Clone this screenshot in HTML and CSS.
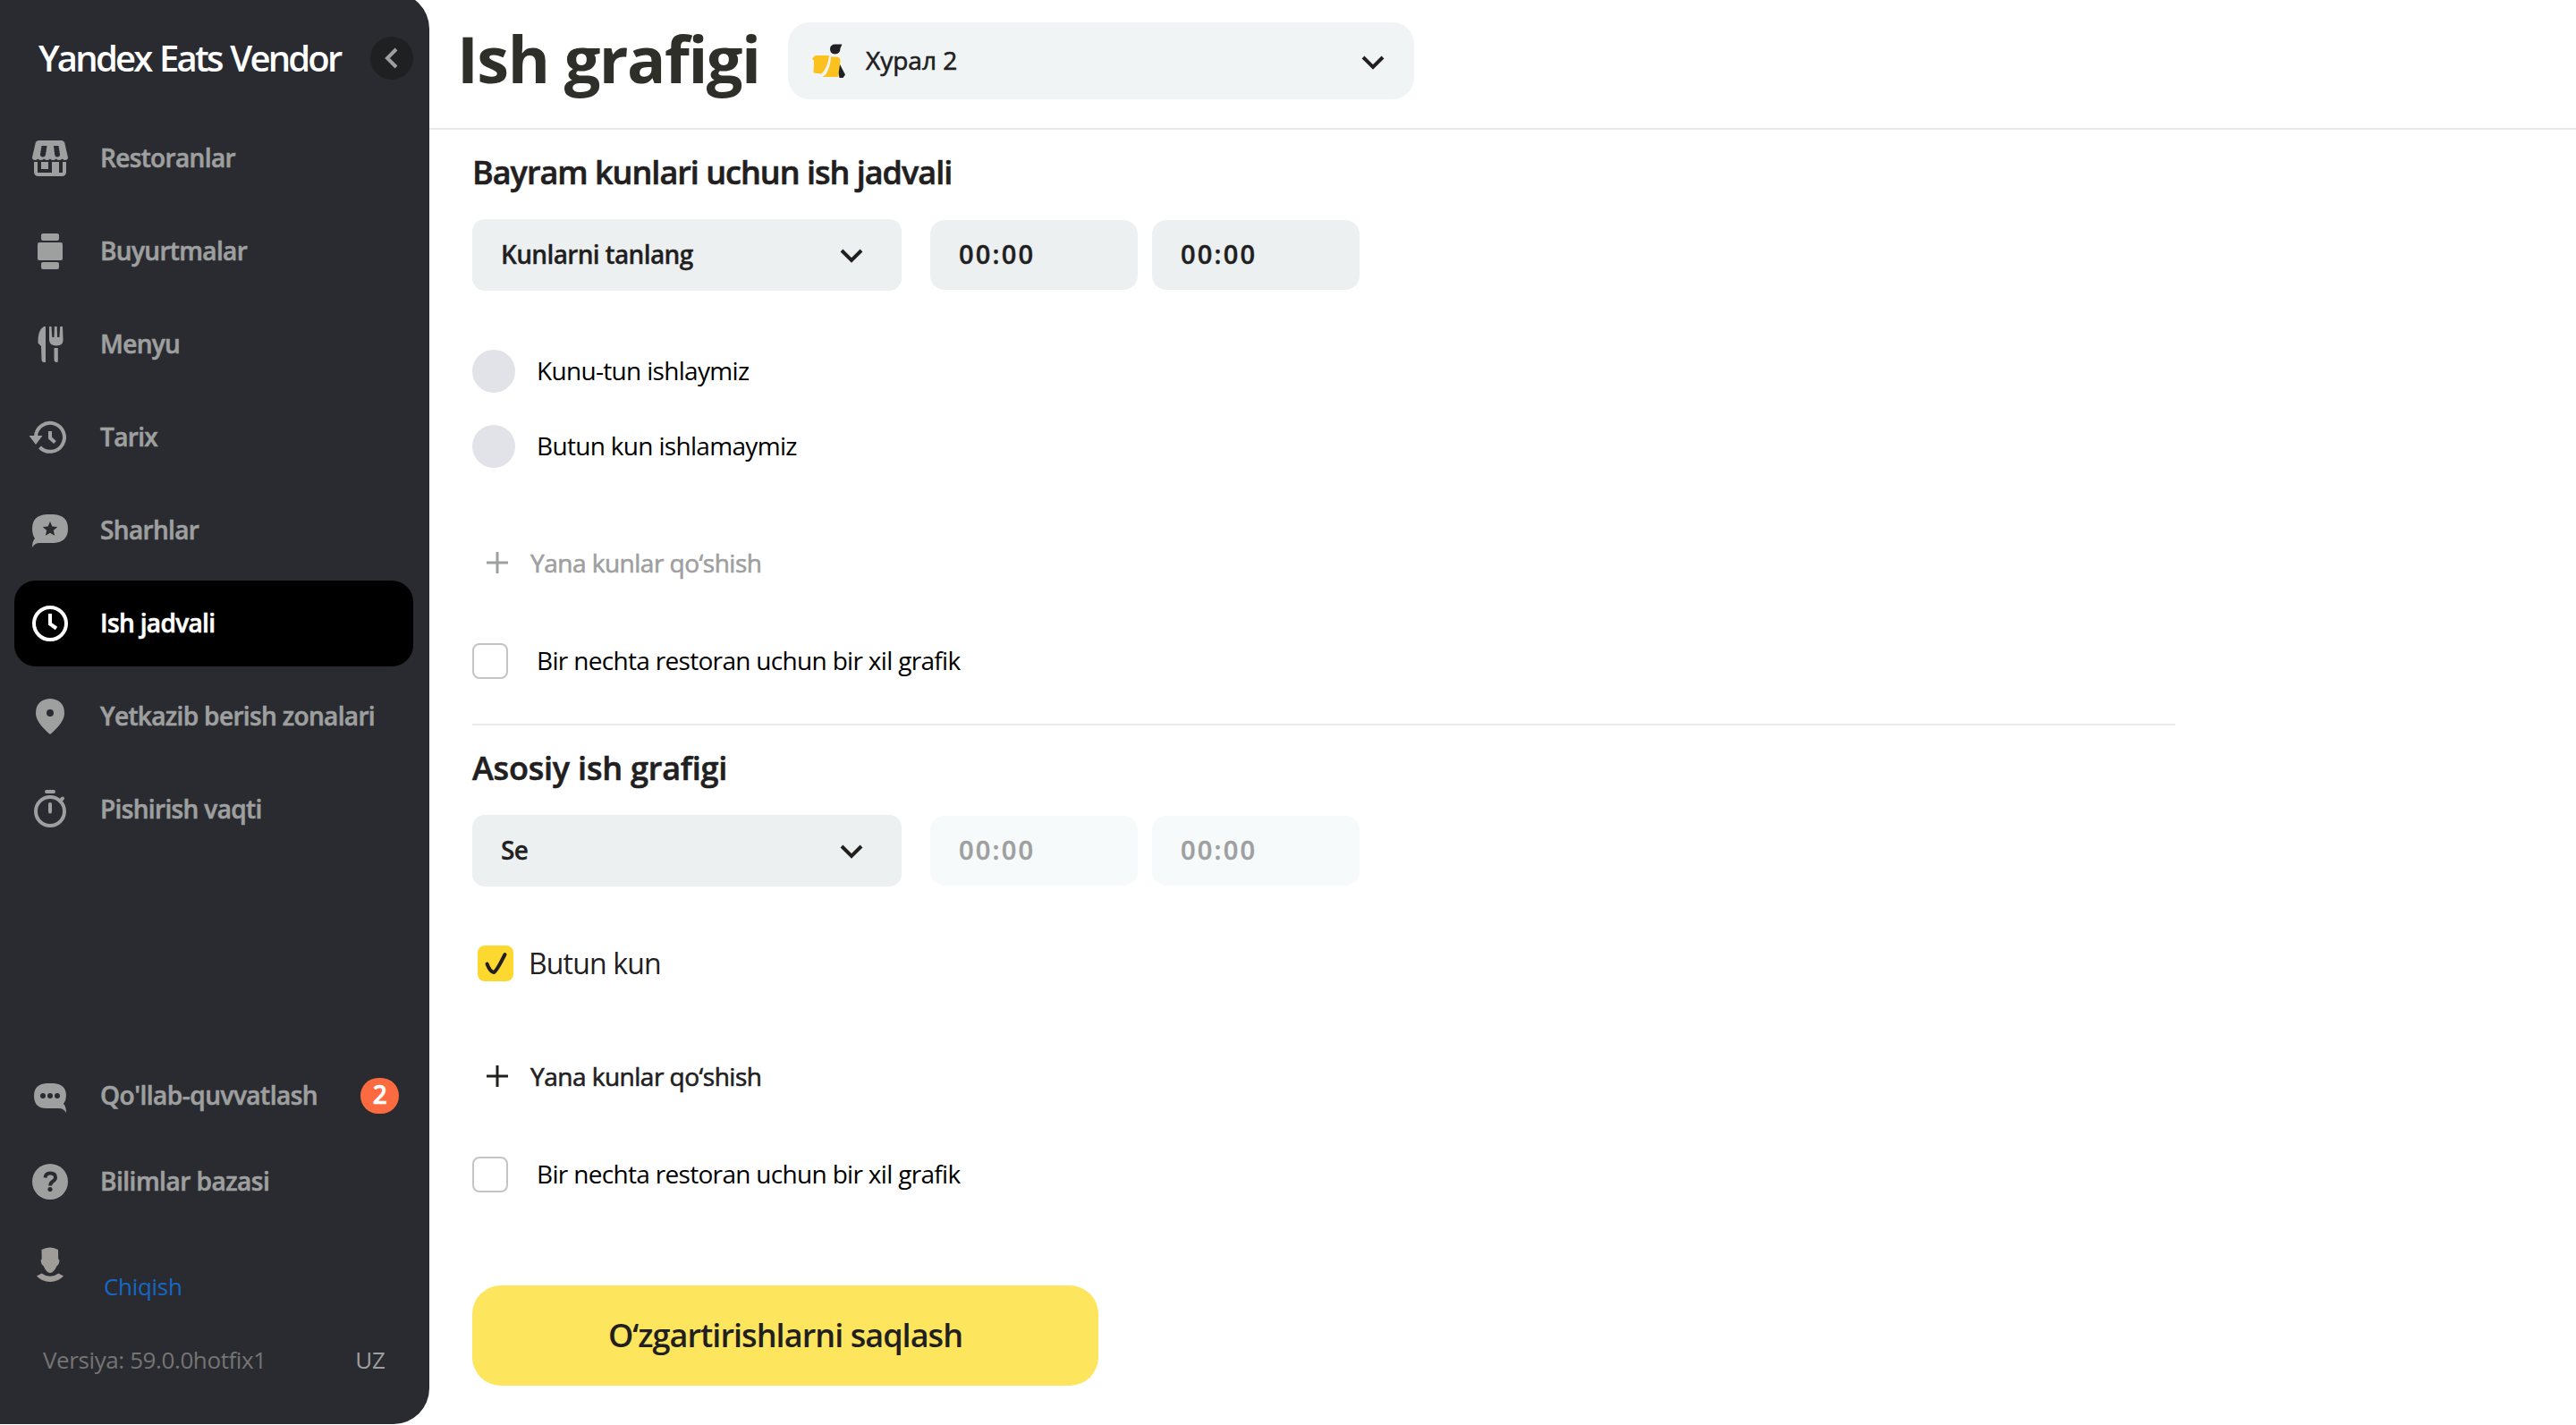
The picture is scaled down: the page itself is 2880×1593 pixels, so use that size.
FILE: index.html
```html
<!DOCTYPE html>
<html lang="uz">
  <head>
    <meta charset="UTF-8" />
    <meta name="viewport" content="width=device-width, initial-scale=1.0" />
    <title>Yandex Eats Vendor</title>
    <link rel="stylesheet" href="styles.css">
  </head>
  <body>
    <aside class="sidebar">
      <div class="brand">
        <span class="brand-name">Yandex Eats Vendor</span>
        <button class="collapse">
          <svg width="48" height="48" viewBox="0 0 48 48">
            <path d="M29 14L19 24l10 10" fill="none" stroke="#9e9f9f" stroke-width="4" />
          </svg>
        </button>
      </div>
      <nav class="menu">
        <a class="item" href="#">
          <svg class="icon" viewBox="0 0 48 48">
            <path fill-rule="evenodd" d="M12 4h24q4 0 4.600 4L44 23q0 3-3 3-2 0-3.400-1.500-1.700 1.500-3.400 1.500-2 0-3.400-1.500-1.700 1.500-3.400 1.500-2 0-3.400-1.500-1.700 1.500-3.400 1.500-2 0-3.400-1.500-1.700 1.500-3.400 1.500-2 0-3.400-1.500Q9 26 7 26q-3 0-3-3L7.400 8Q8 4 12 4zM14.500 10h6l-1.500 10q-.6 2.500-3 2.500-3.200 0-3-3zM28 10h5.500l1.500 9.500q.2 3-3 3-2.400 0-2.800-2.500z" />
            <path d="M6 28h4v12h16V28h8v12h4V28h4v11q0 5-5 5H11q-5 0-5-5zM14 28h8v8h-8z" />
          </svg>
          <span>Restoranlar</span>
        </a>
        <a class="item" href="#">
          <svg class="icon" viewBox="0 0 48 48">
            <rect x="14" y="4" width="20" height="8" rx="2" />
            <rect x="10" y="14" width="28" height="20" rx="2" />
            <rect x="14" y="36" width="20" height="8" rx="2" />
          </svg>
          <span>Buyurtmalar</span>
        </a>
        <a class="item" href="#">
          <svg class="icon" viewBox="0 0 48 48">
            <path d="M19 4v40h-1.500q-3 0-3-3L14 26l-3.500-3.500Q10 8 17 4z" />
            <path d="M23 4h2.500l.8 12h2.200l.4-12h2.800l.4 12h2.300l.8-12H38l.6 15q0 6.500-7.600 6.500T23 19zM28.500 28h4.300v15q0 1-1.200 1-3.100 0-3.100-3z" />
          </svg>
          <span>Menyu</span>
        </a>
        <a class="item" href="#">
          <svg class="icon" viewBox="0 0 48 48">
            <path class="line" d="M8 23a16 16 0 1 1 4.500 12" />
            <path d="M.5 22h15L8 32z" />
            <path class="line" d="M24 17v7.500l5.500 5" />
          </svg>
          <span>Tarix</span>
        </a>
        <a class="item" href="#">
          <svg class="icon" viewBox="0 0 48 48">
            <path fill-rule="evenodd" d="M20 6h8q16 1 16 16T28 38H12q-5 0-8 5 0-7 3-10-3-4-3-11Q4 7 20 6zM24 14l2.400 5.400 5.800.6-4.400 3.900 1.300 5.800-5.100-3-5.100 3 1.300-5.800-4.400-3.900 5.800-.6z" />
          </svg>
          <span>Sharhlar</span>
        </a>
        <a class="item active" href="#">
          <svg class="icon" viewBox="0 0 48 48">
            <circle class="line" cx="24" cy="24" r="18" />
            <path class="line" d="M24 13v11.500l7 5" />
          </svg>
          <span>Ish jadvali</span>
        </a>
        <a class="item" href="#">
          <svg class="icon" viewBox="0 0 48 48">
            <path fill-rule="evenodd" d="M24 4q16 1 16 16.500 0 10-16 23.500Q8 30.500 8 20.500 8 5 24 4zM24 16a4 4 0 1 0 0 8 4 4 0 1 0 0-8z" />
          </svg>
          <span>Yetkazib berish zonalari</span>
        </a>
        <a class="item" href="#">
          <svg class="icon" viewBox="0 0 48 48">
            <circle class="line" cx="24" cy="26" r="16" />
            <path class="line round" d="M20 4h8M24 18v8.500M35 14.500l3-3" />
          </svg>
          <span>Pishirish vaqti</span>
        </a>
      </nav>
      <div class="bottom">
        <a class="item" href="#">
          <svg class="icon" viewBox="0 0 48 48">
            <path fill-rule="evenodd" d="M20 10h8q14 1 14 14 0 5-3 9 3 3 3 10-3-5-8-5H20Q6 38 6 24q0-13 14-14zM16 21a3 3 0 1 0 0 6 3 3 0 1 0 0-6zM24 21a3 3 0 1 0 0 6 3 3 0 1 0 0-6zM32 21a3 3 0 1 0 0 6 3 3 0 1 0 0-6z" />
          </svg>
          <span>Qo'llab-quvvatlash</span>
          <b class="badge">2</b>
        </a>
        <a class="item" href="#">
          <svg class="icon" viewBox="0 0 48 48">
            <circle cx="24" cy="24" r="20" />
            <path d="M18.500 19.500q.5-5 5.700-5 5.800 0 5.800 4.700 0 2.500-3 4.500-2.800 1.800-2.800 4.800" fill="none" stroke="#2a2b30" stroke-width="4" />
            <circle cx="24" cy="32.500" r="2.600" fill="#2a2b30" />
          </svg>
          <span>Bilimlar bazasi</span>
        </a>
        <div class="user">
          <svg class="icon" viewBox="0 0 48 48">
            <path d="M14.500 8q9.500-5 18.500 0l.2 10.500q1.500 0 1.200 2.500-.5 4-2.700 5Q28 34 24 34t-7.500-8q-2.300-1-2.800-5-.3-2.500 1-2.500z" />
            <path d="M9 37.500l5.500-3q9.500 6.500 19 0l5.500 3Q33 44 24 44T9 37.500z" />
          </svg>
          <a class="logout" href="#">Chiqish</a>
        </div>
        <div class="version">
          <span>Versiya: 59.0.0hotfix1</span>
          <span class="lang">UZ</span>
        </div>
      </div>
    </aside>
    <main class="main">
      <header class="header">
        <h1>Ish grafigi</h1>
        <div class="place">
          <svg width="38" height="38" viewBox="0 0 38 38">
            <path d="M30 21l7 13.500-2.500 3.500h-4l-2-9z" fill="#212124" />
            <path d="M20 6q0-5.500 6-5.500h7.500L31.500 5q0 6-6 6.500Q20 11 20 6z" fill="#212124" />
            <path d="M0 17q2-4 5-4h14q-1.500 13.500-8.500 20.500L1.500 32.500l.5-14z" fill="#fbc21f" />
            <path d="M21 14.500h6q4.500 0 4.500 5L29 37H11.500l4-3Q20.500 25 21 14.500z" fill="#fbc21f" />
          </svg>
          <span>Хурал 2</span>
          <svg class="arrow" width="28" height="20" viewBox="0 0 28 20"><path d="M3 4l11 11L25 4" /></svg>
        </div>
      </header>
      <div class="content">
        <section>
          <h2>Bayram kunlari uchun ish jadvali</h2>
          <div class="row">
            <div class="select">
              <span>Kunlarni tanlang</span>
              <svg class="arrow" width="28" height="20" viewBox="0 0 28 20"><path d="M3 4l11 11L25 4" /></svg>
            </div>
            <div class="time">00:00</div>
            <div class="time">00:00</div>
          </div>
          <div class="radios">
            <label class="radio"><i></i><span>Kunu-tun ishlaymiz</span></label>
            <label class="radio"><i></i><span>Butun kun ishlamaymiz</span></label>
          </div>
          <div class="add disabled">
            <svg width="24" height="24" viewBox="0 0 24 24"><path d="M12 0v24M0 12h24" /></svg>
            <span>Yana kunlar qo‘shish</span>
          </div>
          <label class="same"><i></i><span>Bir nechta restoran uchun bir xil grafik</span></label>
        </section>
        <section>
          <h2 class="short">Asosiy ish grafigi</h2>
          <div class="row">
            <div class="select">
              <span>Se</span>
              <svg class="arrow" width="28" height="20" viewBox="0 0 28 20"><path d="M3 4l11 11L25 4" /></svg>
            </div>
            <div class="time disabled">00:00</div>
            <div class="time disabled">00:00</div>
          </div>
          <label class="allday">
            <svg width="40" height="40" viewBox="0 0 40 40"><path d="M10.500 20.500q3.500 9 7.500 9.500Q21 29 30.500 10" /></svg>
            Butun kun
          </label>
          <div class="add">
            <svg width="24" height="24" viewBox="0 0 24 24"><path d="M12 0v24M0 12h24" /></svg>
            <span>Yana kunlar qo‘shish</span>
          </div>
          <label class="same"><i></i><span>Bir nechta restoran uchun bir xil grafik</span></label>
        </section>
        <button class="save">O‘zgartirishlarni saqlash</button>
      </div>
    </main>
  </body>
</html>
```

FILE: styles.css
```css
* {
  box-sizing: border-box;
}

body {
  display: flex;
  margin: 0;
  height: 1593px;
  overflow: hidden;
  background: #fff;
  color: #21201f;
  font-family: "Open Sans", "Noto Sans", sans-serif;
  font-size: 28px;
  line-height: 40px;
}

button {
  border: none;
  padding: 0;
  font-family: inherit;
}

a {
  text-decoration: none;
}

/* sidebar */
.sidebar {
  display: flex;
  flex-direction: column;
  flex: none;
  width: 480px;
  height: 1600px;
  margin-top: -8px;
  border-radius: 0 40px 40px 0;
  background: #2a2b30;
  color: #9e9f9f;
}

.brand {
  display: flex;
  align-items: center;
  justify-content: space-between;
  height: 137px;
  padding: 9px 18px 0 43px;
}

.brand-name {
  color: #fff;
  font-size: 40px;
  font-weight: 600;
  letter-spacing: -2.8px;
  word-spacing: 2px;
}

.collapse {
  width: 48px;
  height: 48px;
  border-radius: 50%;
  background: #1f2022;
}

.menu {
  display: flex;
  flex-direction: column;
  gap: 8px;
  margin: 0 18px 0 16px;
}

.item {
  display: flex;
  align-items: center;
  height: 96px;
  padding: 0 16px;
  border-radius: 24px;
  color: #9e9f9f;
  font-weight: 600;
  letter-spacing: -0.65px;
  -webkit-text-stroke: 0.6px currentColor;
}

.item span {
  padding-bottom: 2px;
}

.item.active {
  background: #000;
  color: #fff;
}

.icon {
  width: 48px;
  height: 48px;
  margin-right: 32px;
  fill: currentColor;
}

.line {
  fill: none;
  stroke: currentColor;
  stroke-width: 4;
}

.round {
  stroke-linecap: round;
}

.bottom {
  margin: 224px 18px 0 16px;
}

.bottom .item {
  letter-spacing: -0.5px;
}

.badge {
  width: 43px;
  height: 40px;
  margin-left: auto;
  border-radius: 20px;
  background: #fc6b3f;
  color: #fff;
  font-weight: 600;
  text-align: center;
  line-height: 37px;
}

.user {
  display: flex;
  height: 96px;
  padding: 20px 16px;
  color: #a09c98;
}

.logout {
  margin: 29px 0 0 4px;
  color: #1568c4;
  font-size: 26px;
  letter-spacing: -0.3px;
}

.version {
  display: flex;
  justify-content: space-between;
  padding: 35px 31px 0 32px;
  color: #757474;
  font-size: 26px;
  letter-spacing: -0.4px;
}

.lang {
  color: #9e9f9f;
  font-weight: 500;
  letter-spacing: 0;
}

/* page */
.main {
  flex: 1;
}

.header {
  display: flex;
  align-items: center;
  height: 145px;
  padding: 0 0 7px 31px;
  border-bottom: 2px solid #e7eaec;
}

h1 {
  width: 370px;
  margin: 0;
  padding-bottom: 7px;
  color: #2f2f2a;
  font-size: 72px;
  line-height: 80px;
  letter-spacing: -1.5px;
}

.place {
  display: flex;
  align-items: center;
  width: 700px;
  height: 86px;
  padding: 0 32px 0 27px;
  border-radius: 24px;
  background: #f1f4f5;
  font-weight: 500;
  -webkit-text-stroke: 0.6px currentColor;
}

.place span {
  margin-left: 22px;
  padding-bottom: 3px;
}

.arrow {
  margin-left: auto;
  fill: none;
  stroke: #21201f;
  stroke-width: 4;
}

.place .arrow {
  margin-top: 4px;
}

.content {
  padding-left: 48px;
}

section {
  width: 1904px;
}

section:first-child {
  padding-bottom: 50px;
  border-bottom: 2px solid #ebebeb;
}

h2 {
  margin: 0;
  padding-top: 24px;
  font-size: 36px;
  font-weight: 600;
  line-height: 48px;
  letter-spacing: -1px;
  -webkit-text-stroke: 0.6px currentColor;
}

h2.short {
  letter-spacing: -0.2px;
}

.row {
  display: flex;
  align-items: center;
  gap: 16px;
  height: 80px;
  margin-top: 28px;
  font-weight: 600;
  letter-spacing: -0.65px;
}

.select {
  display: flex;
  align-items: center;
  width: 480px;
  height: 80px;
  margin-right: 16px;
  padding: 0 42px 0 32px;
  border-radius: 14px;
  background: #ecf0f1;
  -webkit-text-stroke: 0.3px currentColor;
}

.select span {
  padding-bottom: 2px;
}

.select .arrow {
  margin-top: 2px;
}

.time {
  width: 232px;
  height: 78px;
  padding-left: 32px;
  border-radius: 16px;
  background: #ecf0f1;
  font-size: 29px;
  line-height: 75px;
  letter-spacing: 2.2px;
  -webkit-text-stroke: 0.4px currentColor;
}

.time.disabled {
  background: #f6fafb;
  color: #9f9f9f;
}

.radios {
  display: flex;
  flex-direction: column;
  gap: 36px;
  margin-top: 66px;
}

.radio,
.same {
  display: flex;
  align-items: center;
  height: 40px;
  color: #000;
  letter-spacing: -0.68px;
}

.radio {
  height: 48px;
}

.radio span,
.same span {
  padding-bottom: 2px;
}

.radio i {
  width: 48px;
  height: 48px;
  margin-right: 24px;
  border-radius: 50%;
  background: #e2e3e8;
}

.add {
  display: flex;
  align-items: center;
  gap: 25px;
  height: 48px;
  margin-top: 82px;
  padding-left: 16px;
  font-weight: 500;
  letter-spacing: -0.5px;
  -webkit-text-stroke: 0.6px currentColor;
}

.add span {
  padding-bottom: 1px;
}

.add svg {
  stroke: currentColor;
  stroke-width: 3;
}

.add.disabled {
  color: #9e9f9f;
}

.same {
  margin-top: 66px;
}

.same i {
  width: 40px;
  height: 40px;
  margin-right: 32px;
  border: 2px solid #c4c4c4;
  border-radius: 8px;
}

.allday {
  display: flex;
  align-items: center;
  gap: 17px;
  margin-top: 66px;
  padding-left: 6px;
  font-size: 32px;
  letter-spacing: -0.85px;
}

.allday svg {
  border-radius: 8px;
  background: #fdd92f;
  fill: none;
  stroke: #21201f;
  stroke-width: 4;
  stroke-linecap: round;
}

.save {
  width: 700px;
  height: 112px;
  margin-top: 104px;
  padding-bottom: 2px;
  border-radius: 32px;
  background: #fde55e;
  color: #21201f;
  font-size: 36px;
  font-weight: 600;
  letter-spacing: -0.95px;
}
```
